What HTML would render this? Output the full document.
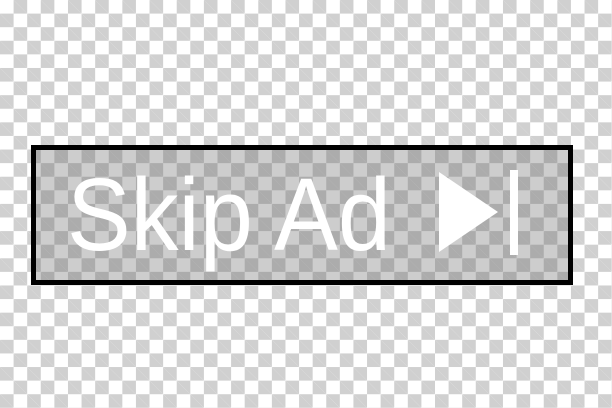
<!DOCTYPE html>
<html><head><style>
html,body{margin:0;padding:0;width:612px;height:408px;overflow:hidden}
body{background-color:#fff;background-image:linear-gradient(45deg,#d0d0d0 25%,transparent 25%,transparent 75%,#d0d0d0 75%),linear-gradient(45deg,#d0d0d0 25%,transparent 25%,transparent 75%,#d0d0d0 75%);background-size:27.2px 27.2px;background-position:0 0,13.6px 13.6px;position:relative}
.box{position:absolute;left:31px;top:145px;width:532px;height:130px;border:5px solid #000;background:rgba(90,90,90,0.3)}
svg{position:absolute;left:0;top:0}
</style></head><body>
<div class="box"></div>
<svg width="612" height="408">
<text x="67" y="250" font-family="Liberation Sans, sans-serif" font-size="103" fill="#fff" textLength="324" lengthAdjust="spacingAndGlyphs">Skip Ad</text>
<polygon points="439,172 498,212 439,252" fill="#fff"/>
<rect x="510" y="170" width="8" height="85" fill="#fff"/>
</svg>
</body></html>
